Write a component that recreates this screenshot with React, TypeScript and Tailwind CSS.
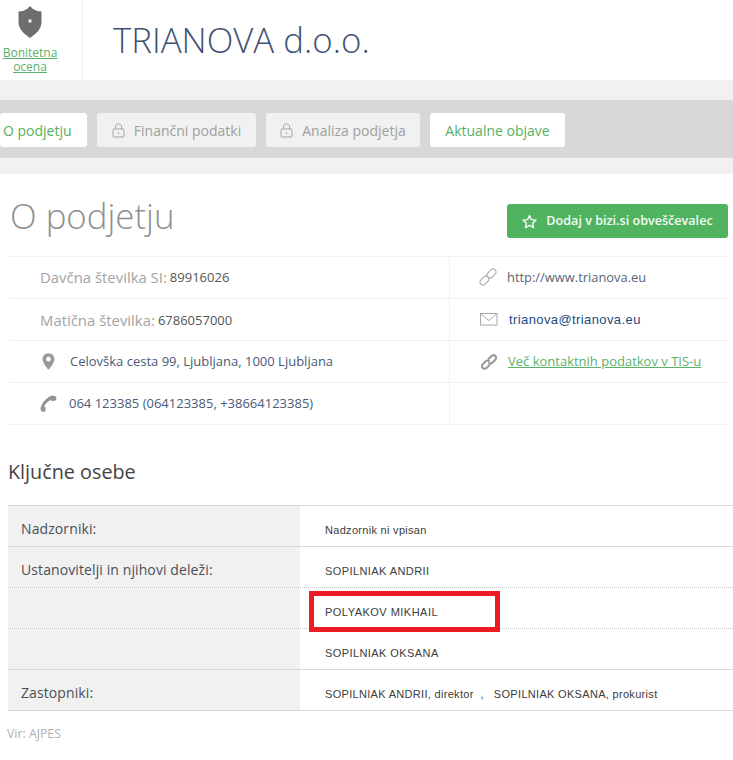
import React from "react";

const Shield = () => (
  <svg width="24" height="32" viewBox="0 0 24 32">
    <path d="M12 0 L15 3 Q19 5.500 23.500 5.500 L23.500 17 Q23 25 12 32 Q1 25 .5 17 L.5 5.500 Q5 5.500 9 3 Z" fill="#6e6e70" />
    <rect x="10.500" y="13.500" width="3" height="3" fill="#f2f2f2" />
  </svg>
);

const Pin = () => (
  <svg width="13" height="17" viewBox="0 0 14 18">
    <path fillRule="evenodd" d="M7 0C3 0 .5 3 .5 6.300 .5 10.500 7 18 7 18s6.500-7.500 6.500-11.700C13.500 3 11 0 7 0Zm0 4a2.500 2.500 0 1 1 0 5 2.500 2.500 0 0 1 0-5Z" fill="#9a9a9a" />
  </svg>
);

const Phone = () => (
  <svg width="17" height="17" viewBox="0 0 18 18">
    <path d="M17 1.500 13.500 0.500C8 1.500 1.500 8 .5 14.500L1.500 17.500 5.500 17.800 6 13.500 4.500 12.300C5.500 9.500 8.500 6.500 11.500 5.300L13 6.500 17.300 5.500Z" fill="#959595" />
  </svg>
);

const LinkLight = () => (
  <svg width="18" height="18" viewBox="0 0 18 18" fill="none" stroke="#a8a8a8" strokeWidth="1">
    <rect x="7.500" y="2.500" width="10" height="6" rx="3" transform="rotate(-45 12.500 5.500)" />
    <rect x=".5" y="9.500" width="10" height="6" rx="3" transform="rotate(-45 5.500 12.500)" />
  </svg>
);

const LinkBold = () => (
  <svg width="16" height="16" viewBox="0 0 16 16" fill="none" stroke="#989898" strokeWidth="2">
    <path d="M7 5.500 10 2.500C11.500 1 13.300 1 14.300 2 15.400 3.200 15.300 4.700 14 6L11.500 8.500C10.300 9.700 8.500 9.700 7.500 8.500" />
    <path d="M9 10.500 6 13.500C4.500 15 2.800 15 1.700 14 .6 12.800.7 11.300 2 10L4.500 7.500C5.700 6.300 7.500 6.300 8.500 7.500" />
  </svg>
);

const Mail = () => (
  <svg width="18" height="13" viewBox="0 0 18 13" fill="none" stroke="#a8a8a8" strokeWidth="1">
    <rect x=".5" y=".5" width="16.500" height="11.500" />
    <path d="M.5.500 8.750 7.500 17 .5" />
  </svg>
);

const LockIcon = () => (
  <svg width="13" height="15" viewBox="0 0 13 15" fill="none" stroke="#a3a3a3" strokeWidth="1" className="mr-[9px]">
    <path d="M3.500 6V3.800C3.500 2 4.800 1 6.500 1S9.500 2 9.500 3.800V6" />
    <rect x="1" y="6" width="11" height="8" rx="1" />
    <rect x="6" y="9" width="1" height="2" fill="#a3a3a3" stroke="none" />
  </svg>
);

const StarIcon = () => (
  <svg width="15" height="15" viewBox="0 0 24 24" fill="none" stroke="#f4fbf5" strokeWidth="2.300" strokeLinejoin="round">
    <path d="M12 2.500 15 9 22.300 9.800 16.900 14.700 18.400 21.800 12 18.200 5.600 21.800 7.100 14.700 1.700 9.800 9 9Z" />
  </svg>
);

const Tab = ({ label, active, locked, className }: { label: string; active?: boolean; locked?: boolean; className: string }) => (
  <div
    className={`flex h-[34px] items-center rounded-[3px] text-[14px] ${active ? "bg-white text-[#54b264]" : "bg-[#f1f1f1] text-[#a0a0a0]"} ${className}`}
  >
    {locked && <LockIcon />}
    {label}
  </div>
);

const InfoRow = ({ children, last }: { children: React.ReactNode; last?: boolean }) => (
  <div className={`flex items-center border-t border-[#f0f0f0] ${last ? "h-[43px] border-b" : "h-[42px]"}`}>{children}</div>
);

const Row = ({ label, children, dotted }: { label?: string; children: React.ReactNode; dotted?: boolean }) => (
  <div className={`flex h-[41px] ${dotted ? "border-b border-dotted border-[#c8c8c8]" : "border-b border-[#d9d9d9]"}`}>
    <div className="flex w-[292px] items-center bg-[#f1f1f1] pt-[5px] pl-[13px] text-[14px] tracking-[0.1px] text-[#4a4f57]">{label}</div>
    <div className="flex flex-1 items-center pt-[9px] pl-[25px] font-['Liberation_Sans',sans-serif] text-[11px] text-[#3c3c3c]">{children}</div>
  </div>
);

export default function App() {
  return (
    <div className="relative h-[760px] w-[733px] overflow-hidden bg-white font-['Open_Sans',sans-serif]">
      <header className="flex h-[80px]">
        <div className="flex w-[83px] flex-col items-center border-r border-[#f0f0f0] pt-[6px] pr-[22px]">
          <Shield />
          <a className="mt-[8px] text-center text-[12px] leading-[14px] text-[#5bb16a] underline">
            Bonitetna
            <br />
            ocena
          </a>
        </div>
        <h1 className="pt-[15px] pl-[30px] text-[34.800px] leading-[50px] font-light text-[#3f5273]">TRIANOVA d.o.o.</h1>
      </header>

      <div className="bg-[#f1f1f1] pt-[20px] pb-[16px]">
        <nav className="flex h-[58px] items-center gap-[10px] bg-[#d8d8d8] pt-[2px]">
          <Tab label="O podjetju" active className="w-[87px] justify-start pl-[3px]" />
          <Tab label="Finančni podatki" locked className="w-[159px] justify-center" />
          <Tab label="Analiza podjetja" locked className="w-[154px] justify-center" />
          <Tab label="Aktualne objave" active className="w-[135px] justify-center" />
        </nav>
      </div>

      <section className="flex h-[82px] items-start justify-between pr-[5px] pl-[10px]">
        <h2 className="pt-[16px] text-[34.800px] leading-[52px] font-light text-[#8f8f8f]">O podjetju</h2>
        <button className="mt-[30px] flex h-[34px] w-[221px] items-center justify-center gap-[9px] rounded-[3px] bg-[#4fb35f] text-[12.600px] font-semibold text-[#f4fbf5]">
          <StarIcon />
          <span>Dodaj v bizi.si obveščevalec</span>
        </button>
      </section>

      <section className="ml-[10px] flex w-[720px]">
        <div className="w-[439px]">
          <InfoRow>
            <span className="pl-[30px] text-[14.900px] text-[#a3a3a3]">Davčna številka SI:</span>
            <span className="pl-[3px] text-[13px] text-[#555]">89916026</span>
          </InfoRow>
          <InfoRow>
            <span className="pt-[2px] pl-[30px] text-[14.900px] text-[#a3a3a3]">Matična številka:</span>
            <span className="pt-[2px] pl-[3px] text-[13px] text-[#555]">6786057000</span>
          </InfoRow>
          <InfoRow>
            <span className="flex w-[45px] justify-start pl-[32px]"><Pin /></span>
            <span className="pl-[15px] text-[13px] text-[#4a5a78]">Celovška cesta 99, Ljubljana, 1000 Ljubljana</span>
          </InfoRow>
          <InfoRow last>
            <span className="flex w-[59px] justify-end pr-[12px]"><Phone /></span>
            <span className="pt-[1px] text-[13px] text-[#4a5a78]">064 123385 (064123385, +38664123385)</span>
          </InfoRow>
        </div>
        <div className="w-[281px] border-l border-[#f0f0f0]">
          <InfoRow>
            <span className="flex w-[57px] justify-end pr-[10px] pb-[1px]"><LinkLight /></span>
            <span className="text-[12.900px] text-[#5a6478]">http://www.trianova.eu</span>
          </InfoRow>
          <InfoRow>
            <span className="flex w-[59px] justify-end pr-[11px] pb-[1px]"><Mail /></span>
            <span className="pt-[1px] font-['Liberation_Sans',sans-serif] text-[13px] tracking-[0.4px] text-[#1d4a80]">trianova@trianova.eu</span>
          </InfoRow>
          <InfoRow>
            <span className="flex w-[58px] justify-end pr-[11px]"><LinkBold /></span>
            <a className="text-[13px] text-[#5bb16a] underline">Več kontaktnih podatkov v TIS-u</a>
          </InfoRow>
          <div className="h-[43px] border-t border-b border-[#f0f0f0]" />
        </div>
      </section>

      <h3 className="pt-[33px] pl-[8px] text-[19.800px] leading-[28px] text-[#444]">Ključne osebe</h3>

      <section className="mt-[19px] ml-[8px] border-t border-[#d9d9d9]">
        <Row label="Nadzorniki:"><span className="tracking-[0.3px]">Nadzornik ni vpisan</span></Row>
        <Row label="Ustanovitelji in njihovi deleži:" dotted><span className="tracking-[0.42px]">SOPILNIAK ANDRII</span></Row>
        <Row dotted><span className="tracking-[0.48px]">POLYAKOV MIKHAIL</span></Row>
        <Row><span className="tracking-[0.42px]">SOPILNIAK OKSANA</span></Row>
        <Row label="Zastopniki:">
          <span className="tracking-[0.31px] whitespace-pre">SOPILNIAK ANDRII, direktor  ,   SOPILNIAK OKSANA, prokurist</span>
        </Row>
      </section>

      <p className="pt-[14px] pl-[7px] text-[12.300px] text-[#b0b0b0]">Vir: AJPES</p>

      <div className="absolute top-[591px] left-[309px] h-[41px] w-[191px] border-[5px] border-[#ed1c24]" />
    </div>
  );
}
